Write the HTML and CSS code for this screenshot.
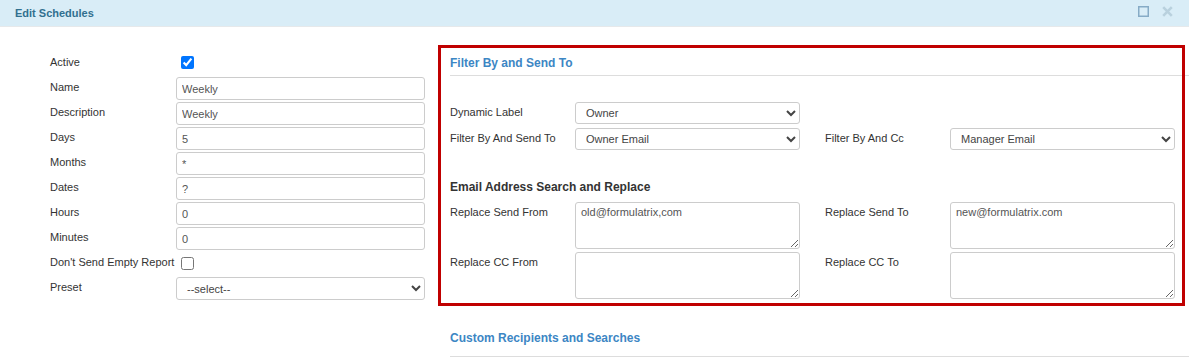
FILE: index.html
```html
<!DOCTYPE html>
<html lang="en">
<head>
    <meta charset="UTF-8">
    <meta name="viewport" content="width=device-width, initial-scale=1.0">
    <title>Edit Schedules</title>
    <link rel="stylesheet" href="styles.css">
</head>
<body>
    <div class="modal-header">
        <h4 class="modal-title">Edit Schedules</h4>
        <div class="modal-tools">
            <svg class="tool-icon" width="11" height="11" viewBox="0 0 11 11">
                <rect x="0.75" y="0.75" width="9.5" height="9.5" fill="none" stroke="#86abc6" stroke-width="1.5"/>
            </svg>
            <svg class="tool-icon" width="11" height="11" viewBox="0 0 11 11">
                <path d="M1.2 1.2L9.8 9.8M9.8 1.2L1.2 9.8" stroke="#b9d1de" stroke-width="2.6"/>
            </svg>
        </div>
    </div>
    <div class="modal-body">
        <form class="schedule-form">
            <div class="form-row">
                <label>Active</label>
                <input type="checkbox" class="check" checked>
            </div>
            <div class="form-row">
                <label>Name</label>
                <input type="text" class="text-input" value="Weekly">
            </div>
            <div class="form-row">
                <label>Description</label>
                <input type="text" class="text-input" value="Weekly">
            </div>
            <div class="form-row">
                <label>Days</label>
                <input type="text" class="text-input" value="5">
            </div>
            <div class="form-row">
                <label>Months</label>
                <input type="text" class="text-input" value="*">
            </div>
            <div class="form-row">
                <label>Dates</label>
                <input type="text" class="text-input" value="?">
            </div>
            <div class="form-row">
                <label>Hours</label>
                <input type="text" class="text-input" value="0">
            </div>
            <div class="form-row">
                <label>Minutes</label>
                <input type="text" class="text-input" value="0">
            </div>
            <div class="form-row">
                <label>Don't Send Empty Report</label>
                <input type="checkbox" class="check check-low">
            </div>
            <div class="form-row">
                <label>Preset</label>
                <select class="select-input">
                    <option>--select--</option>
                </select>
            </div>
        </form>

        <div class="filter-column">
            <div class="highlight-box"></div>
            <h3 class="section-title">Filter By and Send To</h3>
            <div class="field-grid select-grid">
                <label>Dynamic Label</label>
                <select class="select-input"><option>Owner</option></select>
                <span></span>
                <span></span>
                <label>Filter By And Send To</label>
                <select class="select-input"><option>Owner Email</option></select>
                <label>Filter By And Cc</label>
                <select class="select-input"><option>Manager Email</option></select>
            </div>

            <h4 class="sub-title">Email Address Search and Replace</h4>
            <div class="field-grid area-grid">
                <label>Replace Send From</label>
                <textarea class="area-input">old@formulatrix,com</textarea>
                <label>Replace Send To</label>
                <textarea class="area-input">new@formulatrix.com</textarea>
                <label>Replace CC From</label>
                <textarea class="area-input"></textarea>
                <label>Replace CC To</label>
                <textarea class="area-input"></textarea>
            </div>

            <h3 class="section-title section-custom">Custom Recipients and Searches</h3>
        </div>
    </div>
</body>
</html>
```

FILE: styles.css
```css
body {
    margin: 0;
    font-family: "Liberation Sans", Arial, sans-serif;
    font-size: 11px;
    color: #333;
    background-color: #fff;
    overflow: hidden;
}
.modal-header {
    height: 26px;
    display: flex;
    justify-content: space-between;
    align-items: center;
    padding: 0 16px 0 15px;
    background-color: #d9edf7;
    border-bottom: 1px solid #e6e9eb;
}
.modal-title {
    margin: 0;
    font-size: 11px;
    font-weight: bold;
    color: #31708f;
}
.modal-tools {
    display: flex;
    gap: 13px;
    align-items: center;
    margin-top: -4px;
}
.tool-icon {
    display: block;
}
.modal-body {
    display: flex;
    gap: 25px;
}
.schedule-form {
    width: 375px;
    padding: 25px 0 0 50px;
    flex-shrink: 0;
}
.form-row {
    display: grid;
    grid-template-columns: 126px 249px;
    height: 25px;
}
.form-row label {
    padding-top: 4px;
    line-height: 13px;
    white-space: nowrap;
}
.check {
    width: 13px;
    height: 13px;
    margin: 4px 0 0 5px;
}
.check-low {
    margin-top: 5px;
}
.text-input, .select-input, .area-input {
    box-sizing: border-box;
    width: 100%;
    margin: 0;
    border: 1px solid #ccc;
    border-radius: 3px;
    background-color: #fff;
    font-family: "Liberation Sans", Arial, sans-serif;
    font-size: 11px;
    color: #555;
}
.text-input {
    height: 23px;
    padding: 0 5px;
}
.select-input {
    height: 23px;
    padding: 0 4px 0 6px;
    color: #444;
}
.area-input {
    height: 47px;
    padding: 3px 5px;
    resize: vertical;
}
.filter-column {
    position: relative;
    flex: 1;
    padding-top: 29px;
}
.highlight-box {
    position: absolute;
    top: 18px;
    left: -12px;
    width: 741px;
    height: 255px;
    border: 3px solid #c00000;
    pointer-events: none;
}
.section-title {
    margin: 0 0 26px;
    padding-bottom: 5px;
    font-size: 12px;
    line-height: 14px;
    font-weight: bold;
    color: #3c86c4;
    border-bottom: 1px solid #ddd;
}
.section-custom {
    margin: 32px 0 0;
    padding-bottom: 11px;
}
.field-grid {
    display: grid;
    grid-template-columns: 100px 225px 100px 225px;
    column-gap: 25px;
    width: 725px;
}
.field-grid label {
    padding-top: 4px;
    line-height: 13px;
    white-space: nowrap;
}
.select-grid {
    row-gap: 4px;
}
.select-grid .select-input {
    height: 22px;
}
.area-grid {
    row-gap: 3px;
}
.sub-title {
    margin: 30px 0 8px;
    font-size: 12px;
    line-height: 14px;
    font-weight: bold;
    color: #333;
}
```
